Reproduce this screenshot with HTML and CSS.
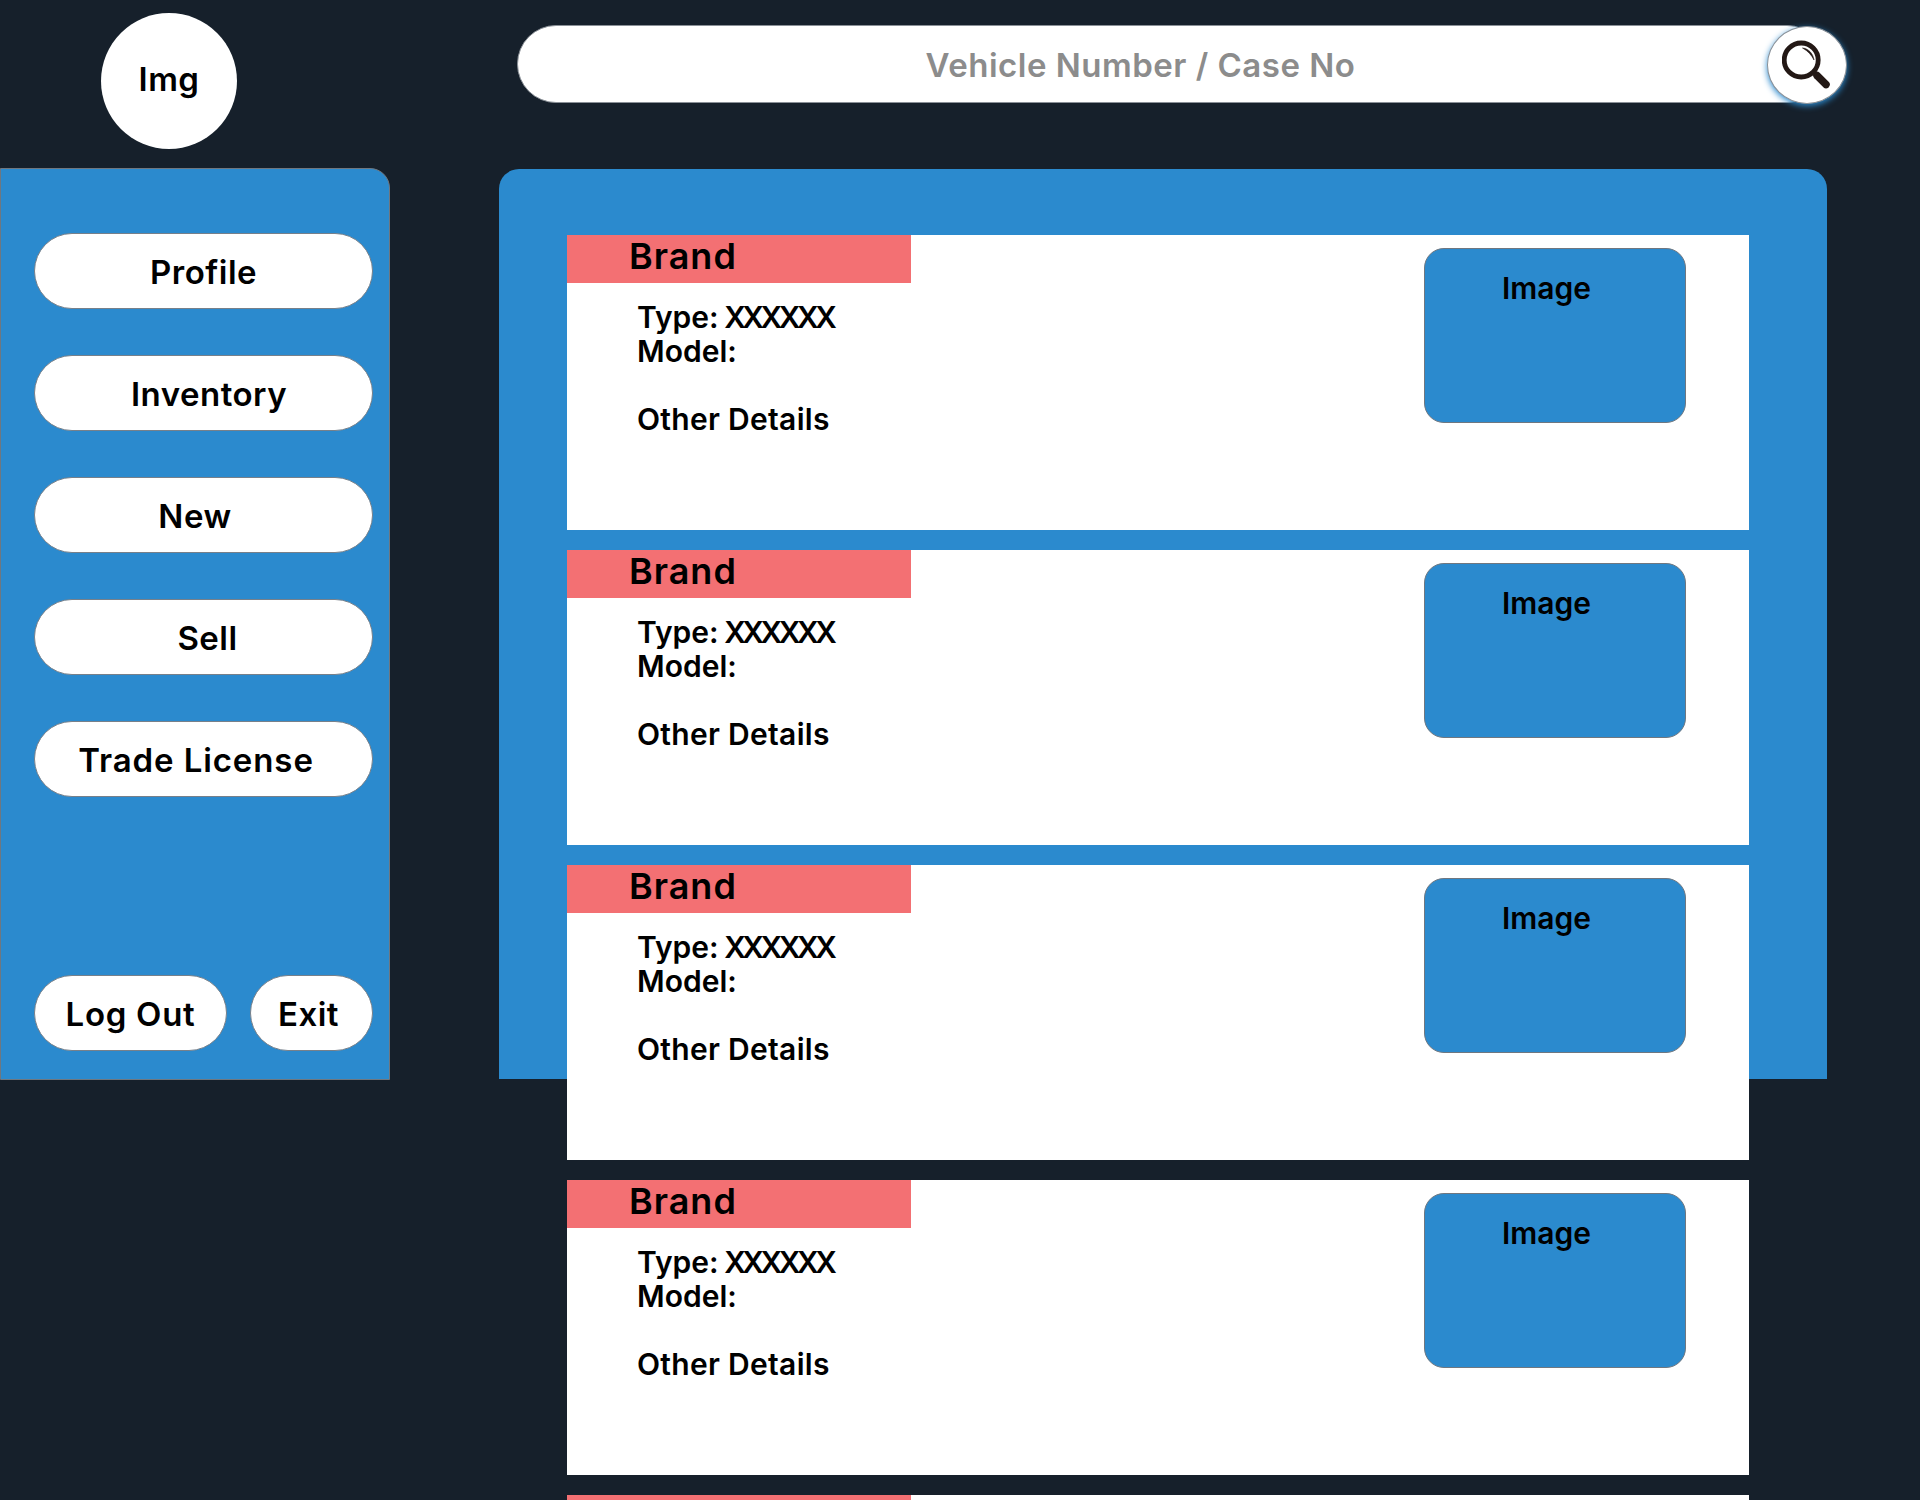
FILE: index.html
```html
<!DOCTYPE html>
<html>
<head>
  <title>Vehicle Inventory</title>
  <link rel="stylesheet" href="styles.css">
</head>
<body>
  <div class="page">
    <div class="side">
      <div class="avatar-row">
        <div class="avatar">Img</div>
      </div>
      <div class="side-panel">
        <ul class="nav">
          <li class="pill nav-profile">Profile</li>
          <li class="pill nav-inventory">Inventory</li>
          <li class="pill nav-new">New</li>
          <li class="pill nav-sell">Sell</li>
          <li class="pill nav-license">Trade License</li>
        </ul>
        <div class="side-actions">
          <div class="pill logout">Log Out</div>
          <div class="pill exit">Exit</div>
        </div>
      </div>
    </div>

    <div class="content">
      <div class="search-row">
        <div class="search-bar">Vehicle Number / Case No</div>
        <div class="search-btn">
          <svg class="search-icon" viewBox="0 0 50 50" width="50" height="50">
            <circle cx="19.2" cy="20" r="17" fill="none" stroke="#231815" stroke-width="4.8"/>
            <path d="M20.5 8 C26 8.5 31 13 32 20 C29.5 15 26 11 20.5 8 Z" fill="#231815" stroke="#231815" stroke-width="0.6"/>
            <path d="M31 31 L36 36" stroke="#231815" stroke-width="4"/>
            <path d="M35 35.5 L44 44.5" stroke="#231815" stroke-width="7.5" stroke-linecap="round"/>
          </svg>
        </div>
      </div>

      <div class="main-panel">
        <div class="card">
          <div class="card-info">
            <div class="brand">Brand</div>
            <div class="details">
              <p>Type: <span class="type-code">XXXXXX</span></p>
              <p>Model:</p>
              <p class="other">Other Details</p>
            </div>
          </div>
          <div class="image-box">Image</div>
        </div>
        <div class="card">
          <div class="card-info">
            <div class="brand">Brand</div>
            <div class="details">
              <p>Type: <span class="type-code">XXXXXX</span></p>
              <p>Model:</p>
              <p class="other">Other Details</p>
            </div>
          </div>
          <div class="image-box">Image</div>
        </div>
        <div class="card">
          <div class="card-info">
            <div class="brand">Brand</div>
            <div class="details">
              <p>Type: <span class="type-code">XXXXXX</span></p>
              <p>Model:</p>
              <p class="other">Other Details</p>
            </div>
          </div>
          <div class="image-box">Image</div>
        </div>
        <div class="card">
          <div class="card-info">
            <div class="brand">Brand</div>
            <div class="details">
              <p>Type: <span class="type-code">XXXXXX</span></p>
              <p>Model:</p>
              <p class="other">Other Details</p>
            </div>
          </div>
          <div class="image-box">Image</div>
        </div>
        <!-- only the top of the next card fits on the page -->
        <div class="card">
          <div class="card-info">
            <div class="brand"></div>
          </div>
        </div>
      </div>
    </div>
  </div>
</body>
</html>
```

FILE: styles.css
```css
html, body {
  height: 100%;
  margin: 0;
}

body {
  background-color: #16202b;
  color: #000000;
  font-family: Inter, "Liberation Sans", sans-serif;
  font-weight: 600;
  overflow: hidden;
}

.page {
  display: flex;
  height: 1500px;
  overflow: hidden;
}

/* Left column */
.side {
  width: 390px;
  flex-shrink: 0;
}

.avatar-row {
  height: 168px;
  padding: 13px 0 0 101px;
  box-sizing: border-box;
}

.avatar {
  width: 136px;
  height: 136px;
  border-radius: 50%;
  background-color: #ffffff;
  display: flex;
  align-items: center;
  justify-content: center;
  padding-bottom: 4px;
  box-sizing: border-box;
  font-size: 33px;
  letter-spacing: 0.5px;
}

.side-panel {
  height: 912px;
  background-color: #2b8ace;
  border: 1px solid #6f7780;
  border-radius: 0 20px 0 0;
  box-sizing: border-box;
  padding: 64px 16px 28px 33px;
  display: flex;
  flex-direction: column;
  justify-content: space-between;
}

.nav {
  list-style-type: none;
  margin: 0;
  padding: 0;
  display: flex;
  flex-direction: column;
  gap: 46px;
}

.pill {
  height: 76px;
  background-color: #ffffff;
  border: 1px solid #77808a;
  border-radius: 38px;
  box-sizing: border-box;
  display: flex;
  align-items: center;
  justify-content: center;
  padding-top: 2px;
  font-size: 33px;
  letter-spacing: 0.5px;
}

.nav-inventory {
  padding-left: 11px;
}

.nav-new {
  padding-right: 17px;
}

.nav-sell {
  padding-left: 8px;
}

.nav-license {
  padding-right: 15px;
  letter-spacing: 0.9px;
}

.side-actions {
  display: flex;
  justify-content: space-between;
}

.logout {
  width: 193px;
  letter-spacing: 0.7px;
}

.exit {
  width: 123px;
  padding-right: 6px;
}

/* Right column */
.content {
  flex: 1;
  min-width: 0;
}

.search-row {
  height: 169px;
  padding: 25px 0 0 127px;
  box-sizing: border-box;
  display: flex;
  align-items: flex-start;
}

.search-bar {
  width: 1309px;
  height: 78px;
  background-color: #ffffff;
  border: 1px solid #8a9097;
  border-radius: 39px;
  box-sizing: border-box;
  display: flex;
  align-items: center;
  justify-content: center;
  padding-top: 2px;
  padding-right: 62px;
  color: #8c8c8c;
  font-size: 33px;
  letter-spacing: 0.5px;
}

.search-btn {
  width: 80px;
  height: 78px;
  margin-left: -59px;
  margin-top: 1px;
  background-color: #ffffff;
  border: 1px solid #8a9097;
  border-radius: 50%;
  box-sizing: border-box;
  box-shadow: 0 2px 6px #2b8ace;
  display: flex;
  align-items: center;
  justify-content: center;
}

.search-icon {
  display: block;
}

.main-panel {
  width: 1328px;
  height: 910px;
  margin-left: 109px;
  background-color: #2b8ace;
  border-radius: 20px 20px 0 0;
  box-sizing: border-box;
  padding: 66px 0 0 68px;
  display: flex;
  flex-direction: column;
  gap: 20px;
}

.card {
  width: 1182px;
  height: 295px;
  flex-shrink: 0;
  background-color: #ffffff;
  display: flex;
  justify-content: space-between;
}

.brand {
  width: 344px;
  height: 48px;
  background-color: #f37073;
  box-sizing: border-box;
  padding-left: 62px;
  font-size: 36px;
  line-height: 43px;
  letter-spacing: 1px;
}

.details {
  padding: 17px 0 0 70px;
  font-size: 30px;
  line-height: 34px;
}

.details p {
  margin: 0;
}

/* the X's sit much tighter than the rest of the line */
.type-code {
  letter-spacing: -3.4px;
  margin-left: -2px;
}

.details .other {
  margin-top: 34px;
  letter-spacing: 0.3px;
}

.image-box {
  width: 262px;
  height: 175px;
  margin: 13px 63px 0 0;
  background-color: #2b8ace;
  border: 1px solid #6f7780;
  border-radius: 20px;
  box-sizing: border-box;
  padding: 22px 17px 0 0;
  text-align: center;
  font-size: 30px;
  line-height: 34px;
}
```
